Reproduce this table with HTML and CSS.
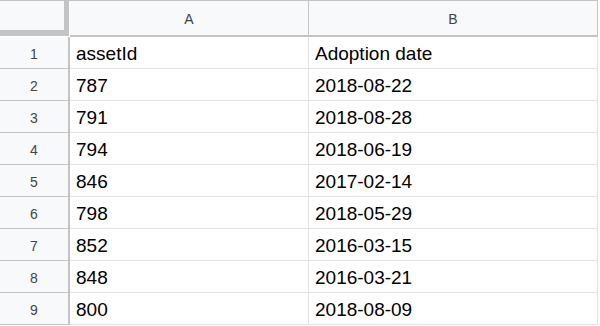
FILE: index.html
```html
<!DOCTYPE html>
<html>
<head>
<meta charset="utf-8">
<link rel="stylesheet" href="styles.css">
</head>
<body>
<div class="sheet">
  <div class="corner"><div class="corner-inner"></div></div>
  <div class="colhead">A</div>
  <div class="colhead">B</div>

  <div class="rowhead">1</div><div class="cell">assetId</div><div class="cell">Adoption date</div>
  <div class="rowhead">2</div><div class="cell">787</div><div class="cell">2018-08-22</div>
  <div class="rowhead">3</div><div class="cell">791</div><div class="cell">2018-08-28</div>
  <div class="rowhead">4</div><div class="cell">794</div><div class="cell">2018-06-19</div>
  <div class="rowhead">5</div><div class="cell">846</div><div class="cell">2017-02-14</div>
  <div class="rowhead">6</div><div class="cell">798</div><div class="cell">2018-05-29</div>
  <div class="rowhead">7</div><div class="cell">852</div><div class="cell">2016-03-15</div>
  <div class="rowhead">8</div><div class="cell">848</div><div class="cell">2016-03-21</div>
  <div class="rowhead">9</div><div class="cell">800</div><div class="cell">2018-08-09</div>
</div>
</body>
</html>
```

FILE: styles.css
```css
html, body {
  margin: 0;
  padding: 0;
  background: #ffffff;
}

.sheet {
  display: grid;
  grid-template-columns: 70px 239px 289px;
  grid-template-rows: 37px repeat(9, 32px);
  width: 598px;
  font-family: "Liberation Sans", Arial, sans-serif;
}

.corner {
  box-sizing: border-box;
  border-top: 1px solid #c4c4c4;
  padding-right: 1px;
  background: #ffffff;
}

.corner-inner {
  box-sizing: border-box;
  height: 35px;
  background: #f8f9fa;
  border-right: 5px solid #c4c4c4;
  border-bottom: 6px solid #c4c4c4;
}

.colhead {
  box-sizing: border-box;
  background: #f8f9fa;
  border-top: 1px solid #c4c4c4;
  border-right: 1px solid #c4c4c4;
  border-bottom: 2px solid #c4c4c4;
  display: flex;
  align-items: center;
  justify-content: center;
  font-size: 14px;
  color: #444;
  padding-top: 1px;
}

.rowhead {
  box-sizing: border-box;
  background: #f8f9fa;
  border-right: 2px solid #c4c4c4;
  border-bottom: 1px solid #c4c4c4;
  display: flex;
  align-items: center;
  justify-content: center;
  font-size: 14px;
  color: #444;
  padding-top: 3px;
}

.cell {
  box-sizing: border-box;
  border-right: 1px solid #e2e2e2;
  border-bottom: 1px solid #e2e2e2;
  display: flex;
  align-items: center;
  padding: 3px 0 0 6px;
  font-size: 19px;
  color: #000;
  white-space: nowrap;
}
```
